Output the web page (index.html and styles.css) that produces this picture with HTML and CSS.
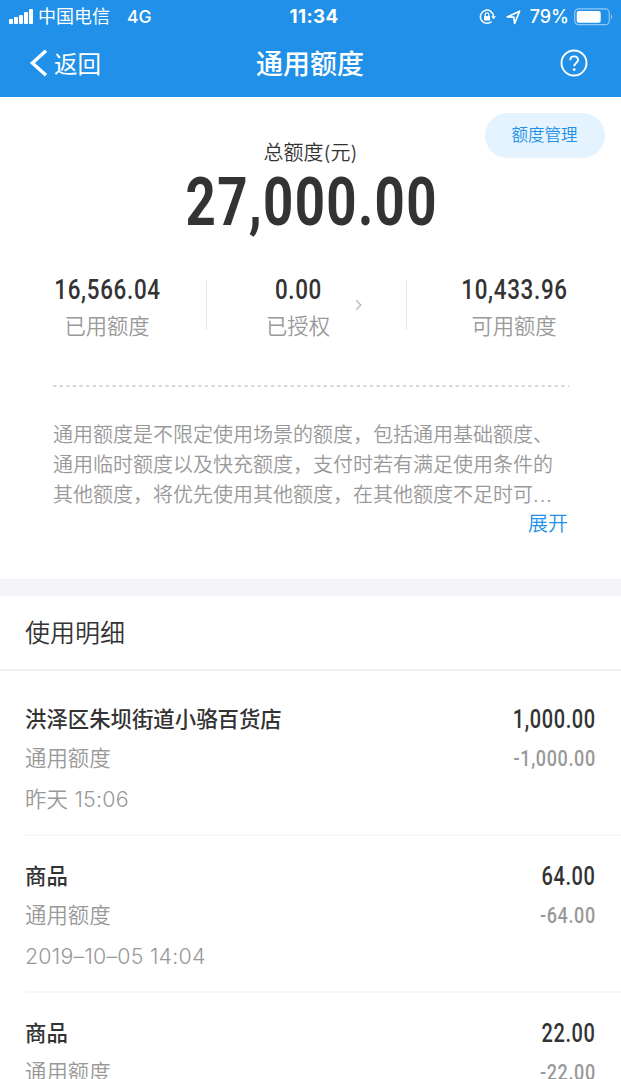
FILE: index.html
```html
<!DOCTYPE html>
<html lang="zh-CN">
  <head>
    <meta charset="UTF-8" />
    <meta name="viewport" content="width=device-width, initial-scale=1.0" />
    <title>通用额度</title>
    <link rel="stylesheet" href="styles.css">
  </head>

  <body>
    <header>
      <div class="status">
        <div class="status-left">
          <svg class="signal" width="25" height="16" viewBox="0 0 25 16" fill="#fff">
            <rect x="0" y="10" width="4" height="5" rx="1" />
            <rect x="5" y="8" width="4" height="7" rx="1" />
            <rect x="10" y="6" width="4" height="9" rx="1" />
            <rect x="15" y="3" width="4" height="12" rx="1" />
            <rect x="20" y="0" width="4" height="15" rx="1" />
          </svg>
          <span class="carrier">中国电信</span>
          <span class="network">4G</span>
        </div>
        <div class="clock">11:34</div>
        <div class="status-right">
          <svg class="lock" width="18" height="16" viewBox="0 0 18 16" fill="none" stroke="#fff" stroke-width="1.5">
            <path d="M12.6 12.5A6.6 6.6 0 1 1 14.6 7.2" />
            <path d="M12.2 7.3h4.8l-2.4 3z" fill="#fff" stroke="none" />
            <rect x="5" y="7" width="6" height="4.6" rx=".6" fill="#fff" stroke="none" />
            <path d="M6.2 7.4V5.6a1.8 1.8 0 0 1 3.6 0v1.8" stroke-width="1.2" />
          </svg>
          <svg class="arrow" width="15" height="15" viewBox="0 0 15 15" fill="none" stroke="#fff" stroke-width="1.7" stroke-linejoin="round">
            <path d="M1.2 7L13.6 1.2 8.6 13.4 7.8 7.2z" />
          </svg>
          <span class="percent">79%</span>
          <svg class="battery" width="39" height="18" viewBox="0 0 39 18">
            <rect x=".7" y=".9" width="34.6" height="15.8" rx="4" fill="none" stroke="#fff" stroke-opacity=".5" stroke-width="1.2" />
            <rect x="2.7" y="2.9" width="24" height="11.8" rx="2" fill="#fff" />
            <path d="M37 6.3c1.6.9 1.6 4.1 0 5z" fill="#fff" fill-opacity=".55" />
          </svg>
        </div>
      </div>
      <nav>
        <a class="back">
          <svg width="20" height="28" viewBox="0 0 20 28" fill="none" stroke="#fff" stroke-width="3.4">
            <path d="M17 1.8L3.4 14 17 26.2" />
          </svg>
          返回
        </a>
        <h1>通用额度</h1>
        <svg class="help" width="28" height="28" viewBox="0 0 28 28" fill="none" stroke="#fff" stroke-width="1.9">
          <circle cx="14" cy="14" r="12.5" />
          <path d="M10.2 11.3c0-2.4 1.6-3.9 3.9-3.9s3.9 1.5 3.9 3.6c0 3-3.8 3.2-3.8 6.2" />
          <circle cx="14.2" cy="20.6" r="1.4" fill="#fff" stroke="none" />
        </svg>
      </nav>
    </header>

    <section class="summary">
      <a class="manage">额度管理</a>
      <p class="total-label">总额度(元)</p>
      <p class="total"><span class="din">27,000.00</span></p>

      <div class="stats">
        <div class="stat used">
          <b class="din">16,566.04</b>
          <span>已用额度</span>
        </div>
        <div class="stat granted">
          <b class="din">0.00</b>
          <span>已授权</span>
          <svg class="more" width="8" height="12" viewBox="0 0 8 12" fill="none" stroke="#bbb" stroke-width="1.4">
            <path d="M1.2 1.2L5.8 6 1.2 10.8" />
          </svg>
        </div>
        <div class="stat available">
          <b class="din">10,433.96</b>
          <span>可用额度</span>
        </div>
      </div>

      <svg class="dashes" width="516" height="2">
        <line x1="0" y1="1" x2="516" y2="1" stroke="#d8d8d8" stroke-width="2" stroke-dasharray="3.4 3.2" />
      </svg>

      <p class="desc">通用额度是不限定使用场景的额度，包括通用基础额度、<br>通用临时额度以及快充额度，支付时若有满足使用条件的<br>其他额度，将优先使用其他额度，在其他额度不足时可<span class="dots">...</span></p>
      <a class="expand">展开</a>
    </section>

    <section class="details">
      <h2>使用明细</h2>
      <ul>
        <li>
          <div class="line title"><span>洪泽区朱坝街道小骆百货店</span><b class="din">1,000.00</b></div>
          <div class="line sub"><span>通用额度</span><span class="din">-1,000.00</span></div>
          <div class="time">昨天 15:06</div>
        </li>
        <li>
          <div class="line title"><span>商品</span><b class="din">64.00</b></div>
          <div class="line sub"><span>通用额度</span><span class="din">-64.00</span></div>
          <div class="time">2019–10–05 14:04</div>
        </li>
        <li>
          <div class="line title"><span>商品</span><b class="din">22.00</b></div>
          <div class="line sub"><span>通用额度</span><span class="din">-22.00</span></div>
        </li>
      </ul>
    </section>
  </body>
</html>
```
FILE: styles.css
```css
* {
  box-sizing: border-box;
  margin: 0;
  padding: 0;
}

body {
  height: 1079px;
  overflow: hidden;
  background: #fff;
  color: #333;
  font-family: Inter, "Noto Sans CJK SC", sans-serif;
  font-weight: 350;
}

svg {
  display: block;
  flex: none;
}

/* narrow figures for the amounts */
.din {
  display: inline-block;
  font-family: Roboto, sans-serif;
  font-weight: 500;
  letter-spacing: 0.03em;
  transform: scaleX(0.8);
}

header {
  height: 97px;
  background: #2190e8;
  color: #fff;
}

.status {
  display: grid;
  grid-template-columns: 1fr auto 1fr;
  align-items: center;
  height: 32px;
  padding: 0 8px 0 9px;
  font-size: 18px;
  line-height: 32px;
  white-space: nowrap;
}

.status-left,
.status-right {
  display: flex;
  align-items: center;
}

.status-right {
  justify-content: flex-end;
}

.carrier {
  margin-left: 4px;
  font-weight: 400;
  line-height: 34px;
}

.network {
  margin-left: 17px;
  font-weight: 500;
  font-size: 17.5px;
}

.clock {
  padding-left: 6px;
  font-size: 18.7px;
  font-weight: 700;
  letter-spacing: 0.4px;
}

.arrow {
  margin-left: 9px;
}

.percent {
  margin-left: 9px;
  font-weight: 500;
}

.battery {
  margin-left: 5px;
}

nav {
  display: grid;
  grid-template-columns: 1fr auto 1fr;
  align-items: center;
  height: 62px;
  padding: 0 33px 0 29px;
}

.back {
  display: flex;
  align-items: center;
  gap: 5px;
  font-size: 23.5px;
  font-weight: 400;
}

h1 {
  padding: 3px 0 0 3px;
  font-size: 27px;
  font-weight: 500;
  line-height: 40px;
}

.help {
  justify-self: end;
}

.summary {
  position: relative;
  height: 482px;
  padding: 41px 53px 0;
}

.manage {
  position: absolute;
  top: 16px;
  right: 16px;
  width: 120px;
  height: 45px;
  padding-right: 1px;
  border-radius: 23px;
  background: #e5f3fe;
  color: #2190e8;
  font-size: 16.5px;
  line-height: 45px;
  text-align: center;
}

.total-label {
  font-size: 20px;
  line-height: 31px;
  text-align: center;
}

.total {
  height: 68px;
  padding-left: 2px;
  font-size: 66px;
  line-height: 64px;
  text-align: center;
}

.total .din {
  font-weight: 700;
  letter-spacing: 0.025em;
}

.stats {
  display: grid;
  grid-template-columns: 207px 200px 214px;
  margin: 44px -53px 0;
  height: 50px;
}

.stat {
  position: relative;
  display: flex;
  flex-direction: column;
  align-items: center;
  margin-top: -7px;
  height: 64px;
}

.stat b {
  font-size: 28px;
  line-height: 31px;
}

.stat span {
  margin-top: 6px;
  color: #999;
  font-size: 21.3px;
  line-height: 30px;
}

.used {
  padding-left: 7px;
}

.granted {
  padding-right: 18px;
}

.granted::before,
.granted::after {
  content: "";
  position: absolute;
  top: 6px;
  left: -1px;
  width: 1px;
  height: 50px;
  background: #e5e5e5;
}

.granted::after {
  left: 199px;
}

.more {
  position: absolute;
  top: 25px;
  left: 148px;
}

.dashes {
  margin-top: 54px;
}

.desc {
  margin-top: 33px;
  color: #999;
  font-size: 20px;
  line-height: 30px;
  white-space: nowrap;
}

.dots {
  letter-spacing: 1px;
}

.expand {
  display: block;
  color: #2190e8;
  font-size: 20px;
  line-height: 28px;
  text-align: right;
}

.details {
  border-top: 17px solid #f4f4f9;
}

h2 {
  height: 75px;
  padding-left: 25px;
  border-bottom: 2px solid #efeff4;
  font-size: 25px;
  font-weight: 350;
  line-height: 75px;
}

ul {
  padding: 8px 0 0 25px;
  list-style: none;
}

li {
  height: 157px;
  padding: 25px 25px 0 0;
  border-bottom: 2px solid #f7f7f8;
}

/* the list is cut by the bottom of the screen */
li:last-child {
  height: 86px;
  border-bottom: none;
  overflow: hidden;
}

.line {
  display: flex;
  justify-content: space-between;
  height: 30px;
  line-height: 30px;
}

.line .din {
  transform-origin: right;
}

.title {
  font-size: 21.4px;
  font-weight: 500;
}

.title .din {
  font-size: 25px;
  line-height: 32px;
}

.sub {
  margin-top: 9px;
  color: #999;
  font-size: 21.4px;
}

.sub .din {
  font-size: 22.5px;
  font-weight: 500;
  letter-spacing: 0.035em;
}

.time {
  margin-top: 11px;
  color: #999;
  font-size: 21.4px;
  letter-spacing: 0.01em;
  line-height: 30px;
}
```
